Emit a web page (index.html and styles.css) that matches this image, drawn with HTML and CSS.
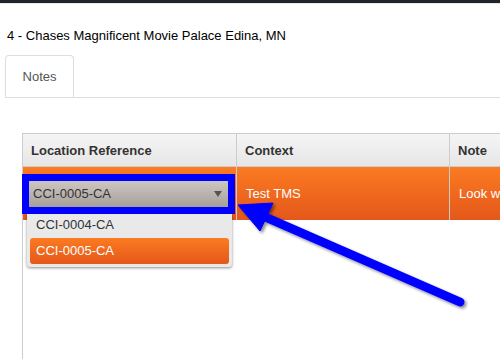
FILE: index.html
```html
<!DOCTYPE html>
<html lang="en">
<head>
    <meta charset="UTF-8">
    <meta name="viewport" content="width=device-width, initial-scale=1.0">
    <title>Location Notes</title>
    <link rel="stylesheet" href="styles.css">
</head>
<body>
    <div class="topbar"></div>
    <h2 class="title">4 - Chases Magnificent Movie Palace Edina, MN</h2>
    <div class="tabs">
        <div class="tab">Notes</div>
    </div>
    <div class="grid">
        <table>
            <thead>
                <tr>
                    <th class="col-ref">Location Reference</th>
                    <th class="col-ctx">Context</th>
                    <th>Note</th>
                </tr>
            </thead>
            <tbody>
                <tr class="selected">
                    <td class="cell-ref">
                        <div class="picker">
                            <div class="picker-value">
                                <span>CCI-0005-CA</span>
                                <span class="caret"></span>
                            </div>
                            <ul class="picker-list">
                                <li>CCI-0004-CA</li>
                                <li class="active">CCI-0005-CA</li>
                            </ul>
                        </div>
                    </td>
                    <td>Test TMS</td>
                    <td>Look when you get there</td>
                </tr>
            </tbody>
        </table>
    </div>

    <!-- annotation arrow -->
    <svg class="callout" width="500" height="359" viewBox="0 0 500 359">
        <defs>
            <filter id="shade" x="-20%" y="-20%" width="140%" height="140%">
                <feDropShadow dx="2" dy="2" stdDeviation="1.5" flood-color="#000" flood-opacity="0.45"/>
            </filter>
        </defs>
        <g filter="url(#shade)" fill="#0000ff" stroke="#0000ff">
            <line x1="256" y1="213" x2="460" y2="302" stroke-width="9" stroke-linecap="round"/>
            <polygon points="238,205 273,203 260,231" stroke-width="1" stroke-linejoin="round"/>
        </g>
    </svg>
</body>
</html>
```

FILE: styles.css
```css
body {
    font-family: "Liberation Sans", Arial, sans-serif;
    font-size: 13px;
    color: #000;
    margin: 0;
    height: 100vh;
    display: flex;
    flex-direction: column;
    overflow: hidden;
    position: relative;
}
.topbar {
    height: 3px;
    flex-shrink: 0;
    background-color: #1f242b;
    border-bottom: 1px solid #e8e8e8;
}
.title {
    margin: 24px 0 0 7px;
    font-size: 13px;
    line-height: 16px;
    font-weight: normal;
}
.tabs {
    display: flex;
    margin: 11px 0 0 5px;
    border-bottom: 1px solid #ddd;
}
.tab {
    width: 67px;
    height: 41px;
    line-height: 41px;
    text-align: center;
    color: #555;
    border: 1px solid #ddd;
    border-bottom: none;
    border-radius: 4px 4px 0 0;
}
.grid {
    flex: 1;
    margin: 35px 0 0 22px;
    border-left: 1px solid #ccc;
}
table {
    width: 640px;
    border-collapse: separate;
    border-spacing: 0;
}
table th {
    height: 32px;
    padding: 0 8px;
    text-align: left;
    font-weight: bold;
    color: #333;
    background: linear-gradient(#f5f5f5, #e6e6e6);
    border-top: 1px solid #ccc;
    border-bottom: 1px solid #ccc;
    border-right: 1px solid #ccc;
}
table td {
    height: 53px;
    padding: 0 9px;
    border-right: 1px solid #ccc;
    white-space: nowrap;
}
.col-ref {
    width: 197px;
}
.col-ctx {
    width: 196px;
}
.selected td {
    color: #fff;
    background: linear-gradient(#fb7b22, #e4571a);
}
.cell-ref {
    padding: 0;
}
.picker {
    position: relative;
    width: 199px;
    margin-left: 6px;
    outline: 7px solid #0000ff;
    outline-offset: 0;
}
.picker-value {
    display: flex;
    align-items: center;
    justify-content: space-between;
    height: 26px;
    padding: 0 6px 0 4px;
    color: #333;
    background: linear-gradient(#cdc7c3, #a69e99);
}
.caret {
    width: 0;
    height: 0;
    border-left: 4px solid transparent;
    border-right: 4px solid transparent;
    border-top: 6px solid #555;
}
.picker-list {
    position: absolute;
    top: 33px;
    left: -2px;
    width: 205px;
    margin: 0;
    padding: 0 3px 3px;
    box-sizing: border-box;
    list-style: none;
    background-color: #e9e9e9;
    border-radius: 0 0 3px 3px;
    box-shadow: 0 1px 3px rgba(0, 0, 0, 0.45);
}
.picker-list li {
    height: 22px;
    line-height: 22px;
    padding-left: 6px;
    color: #333;
}
.picker-list li.active {
    height: 26px;
    line-height: 26px;
    margin-top: 2px;
    color: #fff;
    border-radius: 3px;
    background: linear-gradient(#fb7b22, #e4571a);
}
.callout {
    position: absolute;
    top: 0;
    left: 0;
    pointer-events: none;
}
```
